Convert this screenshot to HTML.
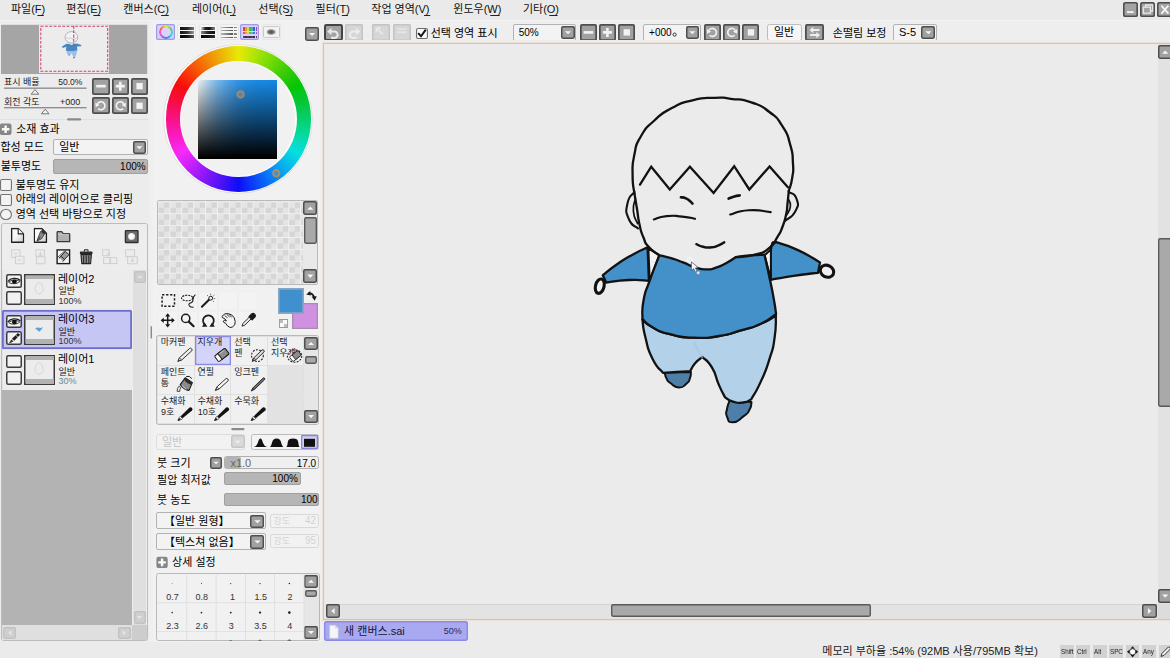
<!DOCTYPE html>
<html lang="ko"><head><meta charset="utf-8"><title>PaintTool SAI</title>
<style>
html,body{margin:0;padding:0}
body{width:1170px;height:658px;overflow:hidden;position:relative;background:#ebebeb;font-family:"Liberation Sans",sans-serif}
#app{position:absolute;left:0;top:0;width:1170px;height:658px;overflow:hidden}
#app div{position:absolute;box-sizing:border-box}
.h{position:absolute;overflow:visible;color:#000;font-family:"Liberation Sans","Noto Sans CJK KR",sans-serif;font-size:11px;line-height:11.5px;white-space:nowrap;pointer-events:none}
.s{font-size:9px;line-height:9.2px}
.k{font-size:9px;line-height:9.3px;color:#1c1c1c}
.g{font-size:9px;line-height:9.4px;color:#333}
.n{font-size:10px}
.q{font-size:8px;line-height:8.8px;color:#1a1a1a;transform:scaleX(.78);transform-origin:0 0}
svg.ov{position:absolute;left:0;top:0;width:1170px;height:658px;overflow:hidden}
</style></head><body>
<div id="app">
<div style="left:0px;top:0px;width:1170px;height:20.4px;background:#eaeaea;"></div>
<div style="left:0px;top:20.4px;width:1170px;height:23px;background:#eeeeee;border-top:1px solid #f3f3f3;"></div>
<span class="h" style="left:10.9px;top:4.17px;width:36px;height:11.5px;color:#111">파일(F)</span>
<span class="h" style="left:66.3px;top:4.17px;width:37.1px;height:11.5px;color:#111">편집(E)</span>
<span class="h" style="left:123.3px;top:4.17px;width:48.6px;height:11.5px;color:#111">캔버스(C)</span>
<span class="h" style="left:192px;top:4.17px;width:46.9px;height:11.5px;color:#111">레이어(L)</span>
<span class="h" style="left:258.3px;top:4.17px;width:37.2px;height:11.5px;color:#111">선택(S)</span>
<span class="h" style="left:315.6px;top:4.17px;width:35.4px;height:11.5px;color:#111">필터(T)</span>
<span class="h" style="left:371.3px;top:4.17px;width:62.1px;height:11.5px;color:#111">작업 영역(V)</span>
<span class="h" style="left:453.3px;top:4.17px;width:49.4px;height:11.5px;color:#111">윈도우(W)</span>
<span class="h" style="left:522.9px;top:4.17px;width:37.8px;height:11.5px;color:#111">기타(O)</span>
<div style="left:1122.8px;top:2.2px;width:15px;height:14.7px;background:#a3a3a3;box-shadow:inset 0 0 0 1.6px #4e4e4e;border-radius:2.6px;"></div>
<div style="left:1140.2px;top:2.2px;width:14.8px;height:14.7px;background:#a3a3a3;box-shadow:inset 0 0 0 1.6px #4e4e4e;border-radius:2.6px;"></div>
<div style="left:1157.4px;top:2.2px;width:14.8px;height:14.7px;background:#a3a3a3;box-shadow:inset 0 0 0 1.6px #4e4e4e;border-radius:2.6px;"></div>
<div style="left:0px;top:21.4px;width:149px;height:620.6px;background:#ececec;"></div>
<div style="left:0.6px;top:24.2px;width:147.4px;height:50.2px;background:#dedede;border-radius:1.5px;"></div>
<div style="left:1.3px;top:24.9px;width:146.1px;height:48.8px;background:#a5a5a5;"></div>
<div style="left:39.2px;top:25px;width:70.3px;height:47.6px;background:#f3e4e8;"></div>
<div style="left:40.2px;top:25.6px;width:68.2px;height:46.3px;background:#ececec;"></div>
<span class="h s" style="left:4px;top:78.18px;width:38.2px;height:9.2px;color:#222">표시 배율</span>
<span class="h s" style="left:58.2px;top:78.18px;width:27px;height:9.2px;color:#222;font-size:8.5px">50.0%</span>
<span class="h s" style="left:4px;top:97.58px;width:38.2px;height:9.2px;color:#222">회전 각도</span>
<span class="h s" style="left:60px;top:97.58px;width:20.2px;height:9.2px;color:#222">+000</span>
<div style="left:92.3px;top:77.7px;width:17.4px;height:16.9px;background:#a1a1a1;box-shadow:inset 0 0 0 1.7px #4e4e4e;border-radius:2.3px;"></div>
<div style="left:111.6px;top:77.7px;width:17.3px;height:16.9px;background:#a1a1a1;box-shadow:inset 0 0 0 1.7px #4e4e4e;border-radius:2.3px;"></div>
<div style="left:130.9px;top:77.7px;width:17.3px;height:16.9px;background:#a1a1a1;box-shadow:inset 0 0 0 1.7px #4e4e4e;border-radius:2.3px;"></div>
<div style="left:92.3px;top:97.3px;width:17.4px;height:16.9px;background:#a1a1a1;box-shadow:inset 0 0 0 1.7px #4e4e4e;border-radius:2.3px;"></div>
<div style="left:111.6px;top:97.3px;width:17.3px;height:16.9px;background:#a1a1a1;box-shadow:inset 0 0 0 1.7px #4e4e4e;border-radius:2.3px;"></div>
<div style="left:130.9px;top:97.3px;width:17.3px;height:16.9px;background:#a1a1a1;box-shadow:inset 0 0 0 1.7px #4e4e4e;border-radius:2.3px;"></div>
<span class="h" style="left:16.2px;top:123.82px;width:45.4px;height:11.5px">소재 효과</span>
<span class="h" style="left:0.5px;top:141.62px;width:45.4px;height:11.5px">합성 모드</span>
<div style="left:53.1px;top:138.9px;width:94.5px;height:16.6px;background:#f3f3f3;border:1px solid #b2b2b2;border-radius:2px;"></div>
<span class="h" style="left:59.2px;top:141.62px;width:20.9px;height:11.5px">일반</span>
<div style="left:132.7px;top:140.9px;width:13.4px;height:13.2px;background:#a1a1a1;box-shadow:inset 0 0 0 1.5px #4e4e4e;border-radius:2.4px;"></div>
<span class="h" style="left:0.7px;top:161.03px;width:42.2px;height:11.5px">불투명도</span>
<div style="left:53.1px;top:159.4px;width:94.5px;height:15px;background:#b6b6b6;border:1px solid #a0a0a0;border-radius:2px;"></div>
<span class="h n" style="left:120.1px;top:161.22px;width:23.4px;height:11.5px">100%</span>
<div style="left:0.4px;top:179.2px;width:11.3px;height:11.7px;background:#f3f3f3;box-shadow:inset 0 0 0 1.1px #747474;border-radius:2px;"></div>
<span class="h" style="left:15.7px;top:179.62px;width:66.8px;height:11.5px">불투명도 유지</span>
<div style="left:0.4px;top:194.2px;width:11.3px;height:11.4px;background:#f3f3f3;box-shadow:inset 0 0 0 1.1px #747474;border-radius:2px;"></div>
<span class="h" style="left:15.7px;top:194.32px;width:125.6px;height:11.5px">아래의 레이어으로 클리핑</span>
<div style="left:0.4px;top:208.7px;width:11.4px;height:11.3px;background:#f3f3f3;box-shadow:inset 0 0 0 1.1px #747474;border-radius:6px;"></div>
<span class="h" style="left:15.7px;top:208.92px;width:117.8px;height:11.5px">영역 선택 바탕으로 지정</span>
<div style="left:1px;top:223.4px;width:146.6px;height:418px;background:#ededed;border:1px solid #bcbcbc;border-radius:2.5px;"></div>
<div style="left:2.4px;top:270px;width:129.8px;height:355.4px;background:#b3b3b3;"></div>
<div style="left:133.2px;top:270px;width:13.2px;height:355.4px;background:#dfdfdf;"></div>
<div style="left:2.4px;top:625.4px;width:129.8px;height:15px;background:#dfdfdf;"></div>
<div style="left:132.2px;top:625.4px;width:14.4px;height:15px;background:#cdcdcd;"></div>
<div style="left:134.4px;top:270.6px;width:11.2px;height:12px;background:#cfcfcf;box-shadow:inset 0 0 0 1.4px #c2c2c2;border-radius:2.4px;"></div>
<div style="left:133.6px;top:610.8px;width:12px;height:13.2px;background:#cfcfcf;box-shadow:inset 0 0 0 1.4px #c2c2c2;border-radius:2.4px;"></div>
<div style="left:3.3px;top:626.6px;width:13.1px;height:12.2px;background:#cfcfcf;box-shadow:inset 0 0 0 1.4px #c2c2c2;border-radius:2.4px;"></div>
<div style="left:118px;top:626.6px;width:12.6px;height:12.2px;background:#cfcfcf;box-shadow:inset 0 0 0 1.4px #c2c2c2;border-radius:2.4px;"></div>
<div style="left:2.4px;top:270px;width:129.8px;height:120.2px;background:#e3e3e3;"></div>
<div style="left:2.6px;top:270px;width:129.6px;height:39.2px;background:#ececec;"></div>
<div style="left:6.4px;top:274.2px;width:15.4px;height:13.8px;background:#f1f1f1;box-shadow:inset 0 0 0 1.5px #3c3c3c;border-radius:2.2px;"></div>
<div style="left:6.4px;top:291px;width:15.4px;height:13.9px;background:#f1f1f1;box-shadow:inset 0 0 0 1.5px #3c3c3c;border-radius:2.2px;"></div>
<div style="left:24.2px;top:274.2px;width:30.7px;height:30.7px;background:#ececec;box-shadow:inset 0 0 0 1.5px #3c3c3c;"></div>
<div style="left:25.5px;top:275.5px;width:28.1px;height:3.9px;background:#b2b2b2;"></div>
<div style="left:25.5px;top:298.6px;width:28.1px;height:5px;background:#b2b2b2;"></div>
<span class="h" style="left:58px;top:273.62px;width:37.7px;height:11.5px">레이어2</span>
<span class="h s" style="left:58.5px;top:287.18px;width:17.5px;height:9.2px;color:#161616">일반</span>
<span class="h s" style="left:58.5px;top:296.98px;width:23.5px;height:9.2px;color:#333">100%</span>
<div style="left:2.4px;top:309.6px;width:129.4px;height:39.2px;background:#c6c6f4;box-shadow:inset 0 0 0 1.8px #6e6ecc;border-radius:1.5px;"></div>
<div style="left:6.4px;top:314.6px;width:15.4px;height:13.8px;background:#f1f1f1;box-shadow:inset 0 0 0 1.5px #3c3c3c;border-radius:2.2px;"></div>
<div style="left:6.4px;top:331.4px;width:15.4px;height:13.9px;background:#f1f1f1;box-shadow:inset 0 0 0 1.5px #3c3c3c;border-radius:2.2px;"></div>
<div style="left:24.2px;top:314.6px;width:30.7px;height:30.7px;background:#ececec;box-shadow:inset 0 0 0 1.5px #3c3c3c;"></div>
<div style="left:25.5px;top:315.9px;width:28.1px;height:3.9px;background:#b2b2b2;"></div>
<div style="left:25.5px;top:339px;width:28.1px;height:5px;background:#b2b2b2;"></div>
<span class="h" style="left:58px;top:314.02px;width:37.7px;height:11.5px">레이어3</span>
<span class="h s" style="left:58.5px;top:327.58px;width:17.5px;height:9.2px;color:#161616">일반</span>
<span class="h s" style="left:58.5px;top:337.38px;width:23.5px;height:9.2px;color:#333">100%</span>
<div style="left:2.6px;top:350.4px;width:129.6px;height:39.2px;background:#ececec;"></div>
<div style="left:6.4px;top:354.6px;width:15.4px;height:13.8px;background:#f1f1f1;box-shadow:inset 0 0 0 1.5px #3c3c3c;border-radius:2.2px;"></div>
<div style="left:6.4px;top:371.4px;width:15.4px;height:13.9px;background:#f1f1f1;box-shadow:inset 0 0 0 1.5px #3c3c3c;border-radius:2.2px;"></div>
<div style="left:24.2px;top:354.6px;width:30.7px;height:30.7px;background:#ececec;box-shadow:inset 0 0 0 1.5px #3c3c3c;"></div>
<div style="left:25.5px;top:355.9px;width:28.1px;height:3.9px;background:#b2b2b2;"></div>
<div style="left:25.5px;top:379px;width:28.1px;height:5px;background:#b2b2b2;"></div>
<span class="h" style="left:58px;top:354.02px;width:36.7px;height:11.5px">레이어1</span>
<span class="h s" style="left:58.5px;top:367.58px;width:17.5px;height:9.2px;color:#161616">일반</span>
<span class="h s" style="left:58.5px;top:377.38px;width:17.5px;height:9.2px;color:#5f8b99">30%</span>
<div style="left:149px;top:21.4px;width:3.6px;height:620.6px;background:#efefef;"></div>
<div style="left:152.6px;top:21.4px;width:170.6px;height:620.6px;background:#f1f1f1;"></div>
<div style="left:156.4px;top:23.6px;width:19px;height:16.8px;background:#d9d2fb;box-shadow:inset 0 0 0 1.2px #9b9bea;border-radius:2.2px;"></div>
<div style="left:177.4px;top:23.6px;width:19px;height:16.8px;background:#f4f4f4;border:1px solid #e6e6e6;border-radius:2.2px;"></div>
<div style="left:198.6px;top:23.6px;width:19px;height:16.8px;background:#f4f4f4;border:1px solid #e6e6e6;border-radius:2.2px;"></div>
<div style="left:219.6px;top:23.6px;width:19px;height:16.8px;background:#f4f4f4;border:1px solid #e6e6e6;border-radius:2.2px;"></div>
<div style="left:240.4px;top:23.6px;width:19px;height:16.8px;background:#d9d2fb;box-shadow:inset 0 0 0 1.2px #9b9bea;border-radius:2.2px;"></div>
<div style="left:261.6px;top:23.6px;width:19px;height:16.8px;background:#f4f4f4;border:1px solid #e6e6e6;border-radius:2.2px;"></div>
<div style="left:159.1px;top:25.3px;width:13.6px;height:13.6px;border-radius:50%;background:conic-gradient(#f0e040,#50d860,#40d8e0,#5070f0,#e060e8,#f06070,#f0e040);-webkit-mask:radial-gradient(circle,transparent 4.6px,#000 5.1px);mask:radial-gradient(circle,transparent 4.6px,#000 5.1px)"></div>
<div style="left:179.6px;top:27px;width:14.8px;height:2.9px;background:linear-gradient(90deg,#111,#222,#777);"></div>
<div style="left:179.6px;top:31.1px;width:14.8px;height:2.9px;background:linear-gradient(90deg,#111,#333,#999);"></div>
<div style="left:179.6px;top:35.2px;width:14.8px;height:2.9px;background:linear-gradient(90deg,#000,#111,#555);"></div>
<div style="left:200.8px;top:27px;width:14.6px;height:2.9px;background:linear-gradient(90deg,#ddd,#222 30%,#111 60%,#888);"></div>
<div style="left:200.8px;top:31.1px;width:14.6px;height:2.9px;background:linear-gradient(90deg,#888,#222,#111);"></div>
<div style="left:200.8px;top:35.2px;width:14.6px;height:2.9px;background:linear-gradient(90deg,#000,#111,#333);"></div>
<div style="left:221.4px;top:26.6px;width:15.4px;height:1.5px;background:linear-gradient(90deg,#b8b8b8,#555 70%,#999);"></div>
<div style="left:232.6px;top:26.3px;width:1.6px;height:2.1px;background:#eee;"></div>
<div style="left:221.4px;top:29.9px;width:15.4px;height:1.5px;background:linear-gradient(90deg,#b8b8b8,#555 70%,#999);"></div>
<div style="left:232.6px;top:29.6px;width:1.6px;height:2.1px;background:#eee;"></div>
<div style="left:221.4px;top:33.2px;width:15.4px;height:1.5px;background:linear-gradient(90deg,#b8b8b8,#555 70%,#999);"></div>
<div style="left:232.6px;top:32.9px;width:1.6px;height:2.1px;background:#eee;"></div>
<div style="left:221.4px;top:36.5px;width:15.4px;height:1.5px;background:linear-gradient(90deg,#b8b8b8,#555 70%,#999);"></div>
<div style="left:232.6px;top:36.2px;width:1.6px;height:2.1px;background:#eee;"></div>
<div style="left:243.2px;top:27.2px;width:1.5px;height:4px;background:linear-gradient(#e04040,#e04040);"></div>
<div style="left:243.2px;top:32.4px;width:1.5px;height:2px;background:#e04040;opacity:.85;"></div>
<div style="left:243.2px;top:35.6px;width:1.5px;height:2px;background:#604040;"></div>
<div style="left:245.25px;top:27.2px;width:1.5px;height:4px;background:linear-gradient(#e0a030,#e0a030);"></div>
<div style="left:245.25px;top:32.4px;width:1.5px;height:2px;background:#e0a030;opacity:.85;"></div>
<div style="left:245.25px;top:35.6px;width:1.5px;height:2px;background:#303050;"></div>
<div style="left:247.3px;top:27.2px;width:1.5px;height:4px;background:linear-gradient(#d8d840,#d8d840);"></div>
<div style="left:247.3px;top:32.4px;width:1.5px;height:2px;background:#d8d840;opacity:.85;"></div>
<div style="left:247.3px;top:35.6px;width:1.5px;height:2px;background:#604040;"></div>
<div style="left:249.35px;top:27.2px;width:1.5px;height:4px;background:linear-gradient(#40c050,#40c050);"></div>
<div style="left:249.35px;top:32.4px;width:1.5px;height:2px;background:#40c050;opacity:.85;"></div>
<div style="left:249.35px;top:35.6px;width:1.5px;height:2px;background:#303050;"></div>
<div style="left:251.4px;top:27.2px;width:1.5px;height:4px;background:linear-gradient(#40b0d0,#40b0d0);"></div>
<div style="left:251.4px;top:32.4px;width:1.5px;height:2px;background:#40b0d0;opacity:.85;"></div>
<div style="left:251.4px;top:35.6px;width:1.5px;height:2px;background:#604040;"></div>
<div style="left:253.45px;top:27.2px;width:1.5px;height:4px;background:linear-gradient(#4060d0,#4060d0);"></div>
<div style="left:253.45px;top:32.4px;width:1.5px;height:2px;background:#4060d0;opacity:.85;"></div>
<div style="left:253.45px;top:35.6px;width:1.5px;height:2px;background:#303050;"></div>
<div style="left:255.5px;top:27.2px;width:1.5px;height:4px;background:linear-gradient(#a040c0,#a040c0);"></div>
<div style="left:255.5px;top:32.4px;width:1.5px;height:2px;background:#a040c0;opacity:.85;"></div>
<div style="left:255.5px;top:35.6px;width:1.5px;height:2px;background:#604040;"></div>
<div style="left:263.4px;top:26px;width:16.4px;height:12.2px;background:#f2f2f2;border:1px solid #c8c8c8;border-radius:1.5px;"></div>
<div style="left:267px;top:29.2px;width:9.4px;height:6.2px;background:radial-gradient(ellipse at 45% 50%,#555 20%,#999 55%,rgba(220,220,220,0) 75%);"></div>
<div style="left:305px;top:27.3px;width:14.2px;height:13.8px;background:#a1a1a1;box-shadow:inset 0 0 0 1.5px #4e4e4e;border-radius:2.4px;"></div>
<div style="left:164.3px;top:45.1px;width:147.8px;height:147.8px;border-radius:50%;background:#fafafa;box-shadow:0 0 0 0.6px #d8d8d8"></div>
<div style="left:165.5px;top:46.3px;width:145.4px;height:145.4px;border-radius:50%;background:conic-gradient(from 0deg,hsl(60,94%,47%) 0deg,hsl(75,94%,46%) 15deg,hsl(90,94%,44%) 30deg,hsl(105,94%,41%) 45deg,hsl(120,94%,40%) 60deg,hsl(135,94%,40%) 75deg,hsl(150,94%,42%) 90deg,hsl(165,94%,44%) 105deg,hsl(180,94%,45%) 120deg,hsl(195,94%,48%) 135deg,hsl(210,94%,50%) 150deg,hsl(225,94%,51%) 165deg,hsl(240,94%,51%) 180deg,hsl(255,94%,52%) 195deg,hsl(270,94%,53%) 210deg,hsl(285,94%,55%) 225deg,hsl(300,94%,57%) 240deg,hsl(315,94%,54%) 255deg,hsl(330,94%,52%) 270deg,hsl(345,94%,51%) 285deg,hsl(0,94%,51%) 300deg,hsl(15,94%,50%) 315deg,hsl(30,94%,49%) 330deg,hsl(45,94%,48%) 345deg,hsl(60,94%,47%) 360deg)"></div>
<div style="left:179.8px;top:60.6px;width:116.8px;height:116.8px;border-radius:50%;background:#fafafa"></div>
<div style="left:181.1px;top:61.9px;width:114.2px;height:114.2px;border-radius:50%;background:#f1f1f1"></div>
<div style="left:198.2px;top:80px;width:79px;height:79px;background:linear-gradient(to top,#000 2%,rgba(0,0,0,.5) 50%,rgba(0,0,0,0) 100%),linear-gradient(to right,#eef0f2 0%,#b2d3ee 12%,#77b7ea 25%,#52a5e8 37%,#3296e6 50%,#238ee5 62%,#1a8ae4 75%,#1688e4 100%);"></div>
<div style="left:157.4px;top:199.6px;width:160.8px;height:85px;background:#e3e3e3;border:1px solid #b9b9b9;border-radius:2px;"></div>
<div style="left:158.4px;top:200.6px;width:144.4px;height:83px;background-color:#e4e4e4;background-image:linear-gradient(90deg,rgba(255,255,255,.55) 1px,transparent 1px),linear-gradient(rgba(255,255,255,.55) 1px,transparent 1px),conic-gradient(#d6d6d6 25%,#e4e4e4 0 50%,#d6d6d6 0 75%,#e4e4e4 0);background-size:11.9px 11.9px,11.9px 11.9px,11.9px 11.9px;background-position:-0.5px 0.3px,-0.5px 0.3px,0.2px 0.9px"></div>
<div style="left:302.9px;top:200.6px;width:14.3px;height:83px;background:#e9e9e9;"></div>
<div style="left:303.3px;top:201.1px;width:14px;height:14.2px;background:#a1a1a1;box-shadow:inset 0 0 0 1.5px #4e4e4e;border-radius:2.4px;"></div>
<div style="left:303.6px;top:217px;width:13.4px;height:27.4px;background:#a9a9a9;box-shadow:inset 0 0 0 1.4px #5a5a5a;border-radius:2.4px;"></div>
<div style="left:303.3px;top:269.1px;width:14px;height:14.1px;background:#a1a1a1;box-shadow:inset 0 0 0 1.5px #4e4e4e;border-radius:2.4px;"></div>
<div style="left:158.4px;top:290.6px;width:19.2px;height:19.2px;background:#f3f3f3;border:1px solid #eeeeee;border-radius:1.5px;"></div>
<div style="left:178.4px;top:290.6px;width:19.2px;height:19.2px;background:#f3f3f3;border:1px solid #eeeeee;border-radius:1.5px;"></div>
<div style="left:198.4px;top:290.6px;width:19.2px;height:19.2px;background:#f3f3f3;border:1px solid #eeeeee;border-radius:1.5px;"></div>
<div style="left:218.4px;top:290.6px;width:19.2px;height:19.2px;background:#f3f3f3;border:1px solid #eeeeee;border-radius:1.5px;"></div>
<div style="left:238.4px;top:290.6px;width:19.2px;height:19.2px;background:#f3f3f3;border:1px solid #eeeeee;border-radius:1.5px;"></div>
<div style="left:158.4px;top:310.6px;width:19.2px;height:19.2px;background:#f3f3f3;border:1px solid #eeeeee;border-radius:1.5px;"></div>
<div style="left:178.4px;top:310.6px;width:19.2px;height:19.2px;background:#f3f3f3;border:1px solid #eeeeee;border-radius:1.5px;"></div>
<div style="left:198.4px;top:310.6px;width:19.2px;height:19.2px;background:#f3f3f3;border:1px solid #eeeeee;border-radius:1.5px;"></div>
<div style="left:218.4px;top:310.6px;width:19.2px;height:19.2px;background:#f3f3f3;border:1px solid #eeeeee;border-radius:1.5px;"></div>
<div style="left:238.4px;top:310.6px;width:19.2px;height:19.2px;background:#f3f3f3;border:1px solid #eeeeee;border-radius:1.5px;"></div>
<div style="left:292.4px;top:303px;width:25.8px;height:26px;background:#d091e1;box-shadow:inset 0 0 0 1.3px #a58cb2;"></div>
<div style="left:278px;top:288.4px;width:25.8px;height:25.8px;background:#4090cf;box-shadow:inset 0 0 0 1.7px #86a6c4;"></div>
<div style="left:278.8px;top:318.8px;width:9.4px;height:9.4px;background:#fafafa;box-shadow:inset 0 0 0 0.9px #9a9a9a;"></div>
<div style="left:279.7px;top:319.7px;width:3.8px;height:3.8px;background:#bdbdbd;"></div>
<div style="left:283.5px;top:323.5px;width:3.8px;height:3.8px;background:#bdbdbd;"></div>
<div style="left:156.4px;top:335px;width:163px;height:89.9px;background:#e0e0e0;border:1px solid #b9b9b9;border-radius:2.5px;"></div>
<div style="left:158px;top:336.5px;width:36.1px;height:28.2px;background:#f0f0f0;"></div>
<div style="left:194.8px;top:335.8px;width:35.9px;height:29.2px;background:#d4d4f9;box-shadow:inset 0 0 0 1.3px #8a8ae2;"></div>
<div style="left:231.4px;top:336.5px;width:35.3px;height:28.2px;background:#f0f0f0;"></div>
<div style="left:267.7px;top:336.5px;width:35.4px;height:28.2px;background:#f0f0f0;"></div>
<div style="left:158px;top:365.7px;width:36.1px;height:28.3px;background:#f0f0f0;"></div>
<div style="left:195.1px;top:365.7px;width:35.3px;height:28.3px;background:#f0f0f0;"></div>
<div style="left:231.4px;top:365.7px;width:35.3px;height:28.3px;background:#f0f0f0;"></div>
<div style="left:267.7px;top:365.7px;width:35.4px;height:28.3px;background:#e2e2e2;"></div>
<div style="left:158px;top:395px;width:36.1px;height:28.4px;background:#f0f0f0;"></div>
<div style="left:195.1px;top:395px;width:35.3px;height:28.4px;background:#f0f0f0;"></div>
<div style="left:231.4px;top:395px;width:35.3px;height:28.4px;background:#f0f0f0;"></div>
<div style="left:267.7px;top:395px;width:35.4px;height:28.4px;background:#e2e2e2;"></div>
<div style="left:304px;top:336px;width:14.4px;height:87.9px;background:#e6e6e6;"></div>
<div style="left:304.4px;top:336.7px;width:13.3px;height:13.8px;background:#a1a1a1;box-shadow:inset 0 0 0 1.5px #4e4e4e;border-radius:2.4px;"></div>
<div style="left:304.7px;top:356px;width:12.7px;height:7.8px;background:#a9a9a9;box-shadow:inset 0 0 0 1.4px #5a5a5a;border-radius:2.4px;"></div>
<div style="left:304.4px;top:409.7px;width:13.3px;height:13.8px;background:#a1a1a1;box-shadow:inset 0 0 0 1.5px #4e4e4e;border-radius:2.4px;"></div>
<span class="h k" style="left:160.7px;top:338.4px;width:24.9px;height:9.3px">마커펜</span>
<span class="h k" style="left:197.4px;top:338.4px;width:24.4px;height:9.3px">지우개</span>
<span class="h k" style="left:234.2px;top:338.4px;width:16.2px;height:9.3px">선택</span>
<span class="h k" style="left:234.2px;top:349.1px;width:7.2px;height:9.3px">펜</span>
<span class="h k" style="left:270.9px;top:338.4px;width:16.3px;height:9.3px">선택</span>
<span class="h k" style="left:270.9px;top:349.1px;width:24.5px;height:9.3px">지우개</span>
<span class="h k" style="left:160.7px;top:367.5px;width:26.1px;height:9.3px">페인트</span>
<span class="h k" style="left:160.7px;top:379.1px;width:7.9px;height:9.3px">통</span>
<span class="h k" style="left:197.4px;top:367.5px;width:15.8px;height:9.3px">연필</span>
<span class="h k" style="left:234.2px;top:367.5px;width:24.8px;height:9.3px">잉크펜</span>
<span class="h k" style="left:160.7px;top:396.7px;width:26.1px;height:9.3px">수채화</span>
<span class="h k" style="left:161.1px;top:407.5px;width:13.1px;height:9.3px">9호</span>
<span class="h k" style="left:197.4px;top:396.7px;width:26.2px;height:9.3px">수채화</span>
<span class="h k" style="left:197.8px;top:407.5px;width:17.4px;height:9.3px">10호</span>
<span class="h k" style="left:234.2px;top:396.7px;width:25.8px;height:9.3px">수묵화</span>
<div style="left:156.4px;top:434px;width:89px;height:15.6px;background:#f2f2f2;border:1px solid #dcdcdc;border-radius:2.5px;"></div>
<span class="h" style="left:162px;top:437.23px;width:20.7px;height:11.5px;color:#c4c4c4">일반</span>
<div style="left:230.7px;top:435.3px;width:14px;height:13.2px;background:#d9d9d9;box-shadow:inset 0 0 0 1.5px #c6c6c6;border-radius:2.4px;"></div>
<div style="left:250.7px;top:434px;width:68.3px;height:15.6px;background:#f4f4f4;border:1px solid #bcbcbc;border-radius:2.5px;"></div>
<div style="left:301.2px;top:435.2px;width:16.4px;height:13.4px;background:#cfcff8;box-shadow:inset 0 0 0 1.3px #8686e0;border-radius:1px;"></div>
<span class="h" style="left:157.1px;top:457.83px;width:34.1px;height:11.5px">붓 크기</span>
<div style="left:210.2px;top:456.9px;width:11.8px;height:11.9px;background:#a1a1a1;box-shadow:inset 0 0 0 1.5px #4e4e4e;border-radius:2.4px;"></div>
<div style="left:224.4px;top:456.4px;width:94.4px;height:12.9px;background:#efefef;border:1px solid #b0b0b0;border-radius:2.5px;"></div>
<div style="left:225.4px;top:457.4px;width:15.8px;height:10.9px;background:#b3b3b3;border-radius:1.5px;"></div>
<span class="h" style="left:230.4px;top:457.96px;width:21.6px;height:10.4px;line-height:10.4px;color:#666">x1.0</span>
<span class="h n" style="left:296.7px;top:457.62px;width:19.4px;height:11.5px">17.0</span>
<span class="h" style="left:157.1px;top:475.03px;width:57px;height:11.5px">필압 최저값</span>
<div style="left:224.4px;top:472px;width:76.2px;height:13.2px;background:#b6b6b6;border:1px solid #a0a0a0;border-radius:2px;"></div>
<span class="h n" style="left:272.3px;top:473.33px;width:23.7px;height:11.5px">100%</span>
<span class="h" style="left:157.1px;top:494.62px;width:34.4px;height:11.5px">붓 농도</span>
<div style="left:224.4px;top:492.6px;width:94.4px;height:13.2px;background:#b6b6b6;border:1px solid #a0a0a0;border-radius:2px;"></div>
<span class="h n" style="left:300.9px;top:494.03px;width:15.2px;height:11.5px">100</span>
<div style="left:156.4px;top:512px;width:109.4px;height:17.4px;background:#f3f3f3;border:1px solid #b2b2b2;border-radius:2px;"></div>
<span class="h" style="left:164px;top:515.4px;width:60.5px;height:12px;line-height:12px">【일반 원형】</span>
<div style="left:250.4px;top:514.7px;width:14.1px;height:13.8px;background:#a1a1a1;box-shadow:inset 0 0 0 1.5px #4e4e4e;border-radius:2.4px;"></div>
<div style="left:270.4px;top:513.6px;width:48.4px;height:14.3px;background:#f2f2f2;border:1px solid #d9d9d9;border-radius:2.5px;"></div>
<span class="h" style="left:273.6px;top:516.81px;width:17px;height:9.4px;font-size:9px;line-height:9.4px;color:#d2d2d2">강도</span>
<span class="h n" style="left:304.9px;top:515.43px;width:11.2px;height:11.5px;color:#d2d2d2">42</span>
<div style="left:156.4px;top:532.8px;width:109.4px;height:16.8px;background:#f3f3f3;border:1px solid #b2b2b2;border-radius:2px;"></div>
<span class="h" style="left:164px;top:535.9px;width:70.7px;height:12px;line-height:12px">【텍스쳐 없음】</span>
<div style="left:250.4px;top:534.8px;width:14.1px;height:13.8px;background:#a1a1a1;box-shadow:inset 0 0 0 1.5px #4e4e4e;border-radius:2.4px;"></div>
<div style="left:270.4px;top:533.6px;width:48.4px;height:14.3px;background:#f2f2f2;border:1px solid #d9d9d9;border-radius:2.5px;"></div>
<span class="h" style="left:273.6px;top:536.81px;width:17px;height:9.4px;font-size:9px;line-height:9.4px;color:#d2d2d2">강도</span>
<span class="h n" style="left:304.9px;top:535.43px;width:11.2px;height:11.5px;color:#d2d2d2">95</span>
<span class="h" style="left:172.1px;top:557.02px;width:44.9px;height:11.5px">상세 설정</span>
<div style="left:156.4px;top:572.6px;width:163.4px;height:68.7px;background:#f1f1f1;border:1px solid #b9b9b9;border-radius:2.5px;"></div>
<div style="left:304px;top:573.6px;width:14.8px;height:66.7px;background:#e6e6e6;"></div>
<div style="left:304.4px;top:574.5px;width:13.3px;height:13.6px;background:#a1a1a1;box-shadow:inset 0 0 0 1.5px #4e4e4e;border-radius:2.4px;"></div>
<div style="left:304.7px;top:590.2px;width:12.7px;height:6.8px;background:#a9a9a9;box-shadow:inset 0 0 0 1.4px #5a5a5a;border-radius:2.4px;"></div>
<div style="left:304.4px;top:625.7px;width:13.3px;height:13.8px;background:#a1a1a1;box-shadow:inset 0 0 0 1.5px #4e4e4e;border-radius:2.4px;"></div>
<span class="h g" style="left:166.22px;top:592.61px;width:11.85px;height:9.4px">0.7</span>
<span class="h g" style="left:195.52px;top:592.61px;width:11.86px;height:9.4px">0.8</span>
<span class="h g" style="left:229.92px;top:592.61px;width:4px;height:9.4px">1</span>
<span class="h g" style="left:254.51px;top:592.61px;width:11.08px;height:9.4px">1.5</span>
<span class="h g" style="left:287.38px;top:592.61px;width:4px;height:9.4px">2</span>
<span class="h g" style="left:166.26px;top:621.61px;width:11.78px;height:9.4px">2.3</span>
<span class="h g" style="left:195.56px;top:621.61px;width:11.78px;height:9.4px">2.6</span>
<span class="h g" style="left:228.78px;top:621.61px;width:4px;height:9.4px">3</span>
<span class="h g" style="left:254.16px;top:621.61px;width:11.78px;height:9.4px">3.5</span>
<span class="h g" style="left:287.14px;top:621.61px;width:4.41px;height:9.4px">4</span>
<div style="left:319.8px;top:21.4px;width:3.4px;height:620.6px;background:#efefef;"></div>
<div style="left:323.6px;top:23.6px;width:19px;height:17.2px;background:#a2a2a2;border:2px solid #444444;border-radius:2.4px;"></div>
<div style="left:345.1px;top:23.8px;width:17.8px;height:16.8px;background:#d6d6d6;box-shadow:inset 0 0 0 1.5px #c4c4c4;border-radius:1.8px;"></div>
<div style="left:371.6px;top:23.8px;width:18.2px;height:16.8px;background:#d6d6d6;box-shadow:inset 0 0 0 1.5px #c4c4c4;border-radius:1.8px;"></div>
<div style="left:392.6px;top:23.8px;width:18.1px;height:16.8px;background:#d6d6d6;box-shadow:inset 0 0 0 1.5px #c4c4c4;border-radius:1.8px;"></div>
<div style="left:416.2px;top:27.6px;width:11.8px;height:11.8px;background:#fafafa;box-shadow:inset 0 0 0 1.1px #6c6c6c;border-radius:2px;"></div>
<span class="h" style="left:430.7px;top:28.43px;width:72px;height:11.5px">선택 영역 표시</span>
<div style="left:513.4px;top:24.2px;width:62.7px;height:16.4px;background:#f3f3f3;border:1px solid #b2b2b2;border-radius:2px;"></div>
<span class="h n" style="left:518.7px;top:27.23px;width:19.5px;height:11.5px">50%</span>
<div style="left:561.2px;top:25.7px;width:13.6px;height:13.5px;background:#a1a1a1;box-shadow:inset 0 0 0 1.5px #4e4e4e;border-radius:2.4px;"></div>
<div style="left:579.7px;top:23.9px;width:17.4px;height:17px;background:#a1a1a1;box-shadow:inset 0 0 0 1.7px #4e4e4e;border-radius:2.3px;"></div>
<div style="left:598.7px;top:23.9px;width:17.4px;height:17px;background:#a1a1a1;box-shadow:inset 0 0 0 1.7px #4e4e4e;border-radius:2.3px;"></div>
<div style="left:618.1px;top:23.9px;width:17.3px;height:17px;background:#a1a1a1;box-shadow:inset 0 0 0 1.7px #4e4e4e;border-radius:2.3px;"></div>
<div style="left:643px;top:24.2px;width:58px;height:16.4px;background:#f3f3f3;border:1px solid #b2b2b2;border-radius:2px;"></div>
<span class="h n" style="left:649.1px;top:27.23px;width:21.6px;height:11.5px">+000</span>
<div style="left:685.6px;top:25.7px;width:13.5px;height:13.5px;background:#a1a1a1;box-shadow:inset 0 0 0 1.5px #4e4e4e;border-radius:2.4px;"></div>
<div style="left:703.9px;top:23.9px;width:17.1px;height:17px;background:#a1a1a1;box-shadow:inset 0 0 0 1.7px #4e4e4e;border-radius:2.3px;"></div>
<div style="left:723.2px;top:23.9px;width:17.1px;height:17px;background:#a1a1a1;box-shadow:inset 0 0 0 1.7px #4e4e4e;border-radius:2.3px;"></div>
<div style="left:742.4px;top:23.9px;width:17.1px;height:17px;background:#a1a1a1;box-shadow:inset 0 0 0 1.7px #4e4e4e;border-radius:2.3px;"></div>
<div style="left:767.3px;top:24.2px;width:35.2px;height:16.4px;background:#f6f6f6;border:1px solid #bdbdbd;border-radius:2.5px;"></div>
<span class="h" style="left:773.9px;top:27.23px;width:21.2px;height:11.5px">일반</span>
<div style="left:805.3px;top:23.8px;width:18.9px;height:17px;background:#a1a1a1;box-shadow:inset 0 0 0 1.8px #4e4e4e;border-radius:2.4px;"></div>
<span class="h" style="left:832.8px;top:28.43px;width:55.8px;height:11.5px">손떨림 보정</span>
<div style="left:893.2px;top:24.2px;width:43.6px;height:16.4px;background:#f3f3f3;border:1px solid #b2b2b2;border-radius:2px;"></div>
<span class="h" style="left:898.9px;top:27.23px;width:17.8px;height:11.5px">S-5</span>
<div style="left:921.4px;top:25.7px;width:14px;height:13.5px;background:#a1a1a1;box-shadow:inset 0 0 0 1.5px #4e4e4e;border-radius:2.4px;"></div>
<div style="left:323.2px;top:39.6px;width:846.8px;height:3.4px;background:linear-gradient(#eeeeee,#f1e6dc);"></div>
<div style="left:322.4px;top:42px;width:847.6px;height:579px;background:#ece1d7;"></div>
<div style="left:323.4px;top:42.6px;width:846.6px;height:577.4px;background:#ebebeb;border:1px solid #dcc0aa;border-right:none;"></div>
<div style="left:324.4px;top:43.6px;width:1px;height:575.4px;background:#efe9e3;"></div>
<div style="left:1157.6px;top:44px;width:12.4px;height:560.2px;background:#e2e2e2;"></div>
<div style="left:1158.1px;top:45.3px;width:14.2px;height:13.8px;background:#a1a1a1;box-shadow:inset 0 0 0 1.5px #4e4e4e;border-radius:2.4px;"></div>
<div style="left:1158.4px;top:238.4px;width:13.6px;height:168.8px;background:#a9a9a9;box-shadow:inset 0 0 0 1.4px #5a5a5a;border-radius:2.4px;"></div>
<div style="left:1158.1px;top:589.3px;width:14.2px;height:13.6px;background:#a1a1a1;box-shadow:inset 0 0 0 1.5px #4e4e4e;border-radius:2.4px;"></div>
<div style="left:324.6px;top:603.8px;width:833px;height:14.8px;background:#e3e3e3;border-top:1px solid #d4d4d4;"></div>
<div style="left:1157.6px;top:603.8px;width:12.4px;height:14.8px;background:#dcdcdc;"></div>
<div style="left:325.5px;top:604.1px;width:14.8px;height:13.8px;background:#a1a1a1;box-shadow:inset 0 0 0 1.5px #4e4e4e;border-radius:2.4px;"></div>
<div style="left:610.6px;top:604.4px;width:260.2px;height:12.8px;background:#a9a9a9;box-shadow:inset 0 0 0 1.4px #5a5a5a;border-radius:2.4px;"></div>
<div style="left:1142.3px;top:604.1px;width:14.8px;height:13.8px;background:#a1a1a1;box-shadow:inset 0 0 0 1.5px #4e4e4e;border-radius:2.4px;"></div>
<div style="left:323.8px;top:621.4px;width:144.4px;height:20px;background:#a9a9f1;box-shadow:inset 0 0 0 1.4px #8b8be6;border-radius:3px;"></div>
<span class="h" style="left:344.1px;top:626.23px;width:65.6px;height:11.5px;color:#16163a">새 캔버스.sai</span>
<span class="h s" style="left:443.8px;top:626.98px;width:18.2px;height:9.2px;color:#2a2a5a">50%</span>
<span class="h" style="left:822.3px;top:645.62px;width:228.2px;height:11.5px;color:#222">메모리 부하율 :54% (92MB 사용/795MB 확보)</span>
<div style="left:1059.7px;top:645px;width:14.2px;height:14px;background:#d2d2d2;"></div>
<span class="h q" style="left:1060.7px;top:648.12px;width:12.4px;height:8.8px">Shift</span>
<div style="left:1076.3px;top:645px;width:13.9px;height:14px;background:#d2d2d2;"></div>
<span class="h q" style="left:1077.3px;top:648.12px;width:12.1px;height:8.8px">Ctrl</span>
<div style="left:1093px;top:645px;width:13.9px;height:14px;background:#d2d2d2;"></div>
<span class="h q" style="left:1094px;top:648.12px;width:12.1px;height:8.8px">Alt</span>
<div style="left:1109.2px;top:645px;width:14px;height:14px;background:#d2d2d2;"></div>
<span class="h q" style="left:1110.2px;top:648.12px;width:12.2px;height:8.8px">SPC</span>
<div style="left:1125.8px;top:645px;width:13.6px;height:14px;background:#d2d2d2;"></div>
<div style="left:1141.7px;top:645px;width:14.3px;height:14px;background:#d2d2d2;"></div>
<span class="h q" style="left:1142.7px;top:648.12px;width:12.5px;height:8.8px">Any</span>
<div style="left:1158.6px;top:645px;width:13.4px;height:14px;background:#d2d2d2;"></div>
<svg class="ov" viewBox="0 0 1170 658">
<rect x="37.44" y="15" width="6.32" height="1" fill="#222" />
<rect x="93.38" y="15" width="6.81" height="1" fill="#222" />
<rect x="161.09" y="15" width="7.69" height="1" fill="#222" />
<rect x="229.97" y="15" width="5.76" height="1" fill="#222" />
<rect x="285.37" y="15" width="6.92" height="1" fill="#222" />
<rect x="341.82" y="15" width="6.08" height="1" fill="#222" />
<rect x="424.02" y="15" width="6.28" height="1" fill="#222" />
<rect x="490.24" y="15" width="9.43" height="1" fill="#222" />
<rect x="549.24" y="15" width="8.32" height="1" fill="#222" />
<rect x="1127" y="11.2" width="6.6" height="1.8" fill="#f4f4f4" />
<g fill="none" stroke="#e6e6e6" stroke-width="1.3"><rect x="1143.4" y="7.2" width="7" height="6"/><path d="M1145.6 7.2v-2.2h7v6h-2" /></g>
<path d="M1161.4 5.6l7 8M1168.4 5.6l-7 8" stroke="#f4f4f4" stroke-width="1.8" fill="none"/>
<rect x="40.8" y="26.2" width="66.9" height="45.1" fill="none" stroke="#cf3f6a" stroke-width="1.05" stroke-dasharray="2.8 1.5"/>
<g>
<ellipse cx="71.4" cy="37.3" rx="6.4" ry="5.7" fill="#f3f3f3" stroke="#a4a6ae" stroke-width="0.8"/>
<path d="M65.6 39.4l1.4 -2l1.6 1.8l1.8 -2l1.8 2.2l1.6 -2.2l1.4 1.8l1.4 -1.6l.8 1.6" fill="none" stroke="#b4b6bc" stroke-width="0.6"/>
<path d="M62.0 46.6L66.5 43.7L69.4 43.9L71.6 44.9L74 43.9L76.6 43.5L81.5 45L81 46.2L77 46.5L77.4 50.5L71.6 51.4L65.8 50.8L66.4 46.7L62.6 48Z" fill="#4686c2"/>
<path d="M65.8 50.6L71.6 51.4L77.4 50.3L76.4 54L75.2 57L73.2 57L72.2 54.2L71.4 53.2L70.4 54.6L67.6 54.6Z" fill="#9dc0e2"/>
<path d="M67.8 54.5l2.4 .1l-1 1.5zM73.2 56.9l2 .1l-1.4 1.9z" fill="#4a79a6"/>
</g>
<path d="M73.7 26V46.4" stroke="#d23c6a" stroke-width="1.1" stroke-dasharray="2.8 1.5" fill="none"/>
<rect x="4" y="87.6" width="82.6" height="1.1" fill="#757575" />
<path d="M35 89.6l3.8 4.6h-7.6z" fill="#f6f6f6" stroke="#666" stroke-width="0.9"/>
<rect x="4" y="107.2" width="82.6" height="1.1" fill="#757575" />
<path d="M45.2 109.2l3.8 4.6h-7.6z" fill="#f6f6f6" stroke="#666" stroke-width="0.9"/>
<svg x="92.6" y="78" width="16.8" height="16.3" viewBox="0 0 16 16" ><rect x="3.3" y="6.7" width="9.4" height="2.6" fill="#f2f2f2"/></svg>
<svg x="111.9" y="78" width="16.7" height="16.3" viewBox="0 0 16 16" ><path d="M3.6 6.7h3.1v-3.1h2.6v3.1h3.1v2.6h-3.1v3.1h-2.6v-3.1h-3.1z" fill="#f2f2f2"/></svg>
<svg x="131.2" y="78" width="16.7" height="16.3" viewBox="0 0 16 16" ><rect x="4.9" y="4.9" width="6.2" height="6.2" fill="#f2f2f2"/></svg>
<svg x="92.6" y="97.6" width="16.8" height="16.3" viewBox="0 0 16 16" ><path d="M5.24 10.76A3.9 3.9 0 1 0 4.62 6.05" fill="none" stroke="#f2f2f2" stroke-width="1.6"/><path d="M2.7 9.4L6.7 7.3L2.5 4.7z" fill="#f2f2f2"/></svg>
<svg x="111.9" y="97.6" width="16.7" height="16.3" viewBox="0 0 16 16" ><g transform="translate(16 0) scale(-1 1)"><path d="M5.24 10.76A3.9 3.9 0 1 0 4.62 6.05" fill="none" stroke="#f2f2f2" stroke-width="1.6"/><path d="M2.7 9.4L6.7 7.3L2.5 4.7z" fill="#f2f2f2"/></g></svg>
<svg x="131.2" y="97.6" width="16.7" height="16.3" viewBox="0 0 16 16" ><rect x="4.9" y="4.9" width="6.2" height="6.2" fill="#f2f2f2"/></svg>
<rect x="1" y="119" width="147" height="0.8" fill="#dedede" />
<rect x="67" y="118.3" width="14.2" height="2.3" fill="#8a8a8a" rx="1.1" />
<rect x="-0.2" y="123.4" width="11.7" height="11.6" fill="#868686" rx="2.2" />
<path d="M4.45 125.4h2.4v2.6h2.6v2.4h-2.6v2.6h-2.4v-2.6h-2.6v-2.4h2.6z" fill="#fafafa"/>
<svg x="133" y="141.2" width="12.8" height="12.6" viewBox="0 0 16 16" ><path d="M4.2 6.4h7.6L8 10.1z" fill="#f4f4f4"/></svg>
<defs><linearGradient id="pg" x1="0" y1="0" x2="1" y2="1"><stop offset="0.45" stop-color="#f8f8f8"/><stop offset="1" stop-color="#c9c9c9"/></linearGradient></defs>
<svg x="10.9" y="227.8" width="13.4" height="15.2" viewBox="0 0 13.4 15.2" ><path d="M0.7 0.7h6.6l5.4 5.4v8.4h-12z" fill="url(#pg)" stroke="#1e1e1e" stroke-width="1.4" stroke-linejoin="round"/><path d="M7.3 0.7v5.4h5.4" fill="#f4f4f4" stroke="#1e1e1e" stroke-width="1.1" stroke-linejoin="round"/></svg>
<svg x="33.6" y="227.8" width="13.8" height="15.2" viewBox="0 0 13.8 15.2" ><path d="M0.7 0.7h7.4l4.8 5v8.8h-12.2z" fill="url(#pg)" stroke="#1e1e1e" stroke-width="1.4" stroke-linejoin="round"/><path d="M9.2 1.2l3.6 3.8l-2 2l-3.6 -3.6z" fill="#333"/><path d="M7 3.6l3.4 3.4l-2.4 4l-4.6 2.2l1.8 -5.2z" fill="#8a8a8a" stroke="#333" stroke-width="0.8"/><path d="M3.6 13l3 -4" stroke="#222" stroke-width="0.8"/></svg>
<path d="M57.1 241.7v-9.2q0 -0.8 .8 -0.8h3.8l1.6 2h5.6q.8 0 .8 .8v7.2z" fill="#b1b1b1" stroke="#3a3a3a" stroke-width="1.3" stroke-linejoin="round"/>
<path d="M58.2 234.4h10.6" stroke="#d0d0d0" stroke-width="0.8"/>
<defs><radialGradient id="mk" cx="0.45" cy="0.45" r="0.6"><stop offset="0.5" stop-color="#fbfbfb"/><stop offset="1" stop-color="#c8c8c8"/></radialGradient></defs>
<rect x="125.4" y="230.7" width="12.6" height="11.8" fill="#6c6c6c" stroke="#2e2e2e" stroke-width="1.3" rx="0.6" />
<circle cx="131.6" cy="236.6" r="3.5" fill="url(#mk)"/>
<g fill="#ececec" stroke="#cdcdcd" stroke-width="0.9"><rect x="11.6" y="249.8" width="8.4" height="7.6"/><rect x="15.4" y="256.2" width="8.6" height="7.6"/><path d="M14.2 253.4h3" /><path d="M18.2 260.2h3"/></g>
<g fill="#ececec" stroke="#cdcdcd" stroke-width="0.9"><rect x="35.8" y="249.8" width="8.6" height="6.4"/><rect x="36.4" y="256.8" width="8.6" height="7"/><path d="M40.4 251.6v4l-2 -1.6m2 1.6l2 -1.6" fill="none"/></g>
<g fill="#ececec" stroke="#cdcdcd" stroke-width="0.9"><rect x="102.6" y="249.8" width="6.6" height="6"/><rect x="103.6" y="257.6" width="6.4" height="6"/><rect x="110.4" y="257.6" width="6.4" height="6"/><path d="M107 252.4l3 3m0 -3l-3 3" fill="none"/></g>
<g fill="#ececec" stroke="#cdcdcd" stroke-width="0.9"><rect x="125.6" y="249.8" width="9" height="6.6"/><rect x="127.6" y="256.8" width="9.6" height="7"/><path d="M132.4 258.2v3.4l-1.8 -1.4m1.8 1.4l1.8 -1.4" fill="none"/></g>
<g><rect x="57.1" y="249.9" width="12.5" height="13.7" fill="#f6f6f6" stroke="#1e1e1e" stroke-width="1.4"/><path d="M57.6 257.4l8 -7.2" stroke="#333" stroke-width="0.9"/><path d="M65.4 251.4l3.6 3.2l-6.2 7l-3.8 -3.4z" fill="#9a9a9a" stroke="#2a2a2a" stroke-width="1"/><path d="M61 256.2l3.6 3.2" stroke="#2a2a2a" stroke-width="0.9"/><path d="M59.4 258.4l3.2 3" stroke="#f4f4f4" stroke-width="1.3"/></g>
<g><path d="M84.4 251.6v-1.2q0 -.6 .6 -.6h2.4q.6 0 .6 .6v1.2" fill="none" stroke="#222" stroke-width="1.1"/><rect x="79.9" y="251.6" width="12.6" height="2.6" rx="0.8" fill="#2a2a2a"/><path d="M81 254.6h10.4l-.8 9h-8.8z" fill="#8c8c8c" stroke="#222" stroke-width="1.1" stroke-linejoin="round"/><path d="M83.6 255.4v7.6M86.2 255.4v7.6M88.8 255.4v7.6" stroke="#2a2a2a" stroke-width="1.1"/></g>
<svg x="134.4" y="270.6" width="11.2" height="12" viewBox="0 0 16 16" ><path d="M4.3 9.9h7.4L8 5.9z" fill="#e4e4e4"/></svg>
<svg x="133.6" y="610.8" width="12" height="13.2" viewBox="0 0 16 16" ><path d="M4.3 6.1h7.4L8 10.1z" fill="#e4e4e4"/></svg>
<svg x="3.3" y="626.6" width="13.1" height="12.2" viewBox="0 0 16 16" ><path d="M10.1 4.3v7.4L6 8z" fill="#e4e4e4"/></svg>
<svg x="118" y="626.6" width="12.6" height="12.2" viewBox="0 0 16 16" ><path d="M5.9 4.3v7.4L10 8z" fill="#e4e4e4"/></svg>
<svg x="6.4" y="274" width="15.4" height="14" viewBox="0 0 16 16" preserveAspectRatio="none"><path d="M1.6 8.6C4 4.6 10.6 3.6 14.6 7.4" fill="none" stroke="#222" stroke-width="1.5"/>
<path d="M2.4 9.4C5 6.4 11 6 13.8 8.8C11 11.6 5 11.8 2.4 9.4z" fill="#fbfbfb" stroke="#222" stroke-width="1"/>
<circle cx="8.3" cy="8.7" r="2.5" fill="#111"/></svg>
<path d="M35 287.5q1 -5 4 -5t4 5q1 5 -4 6.5q-4 -1 -4 -6.5z" fill="none" stroke="#d4d4d8" stroke-width="0.9"/>
<svg x="6.4" y="314.4" width="15.4" height="14" viewBox="0 0 16 16" preserveAspectRatio="none"><path d="M1.6 8.6C4 4.6 10.6 3.6 14.6 7.4" fill="none" stroke="#222" stroke-width="1.5"/>
<path d="M2.4 9.4C5 6.4 11 6 13.8 8.8C11 11.6 5 11.8 2.4 9.4z" fill="#fbfbfb" stroke="#222" stroke-width="1"/>
<circle cx="8.3" cy="8.7" r="2.5" fill="#111"/></svg>
<svg x="6.8" y="331.6" width="14.6" height="13.4" viewBox="0 0 16 16" preserveAspectRatio="none"><path d="M12.2 1.6l2.4 2.2l-6.4 7l-2.6 -2.2z" fill="#1c1c1c"/><path d="M5 9.4l2.4 2l-3.4 2.2l-1.6 .2z" fill="#333"/><path d="M9.6 4.2l2.4 2.2" stroke="#ddd" stroke-width="1" fill="none"/></svg>
<path d="M35.4 328l2.6 -.6l2.6 .6l2.2 -1l-1.2 2.6l-2.2 2.2l-2 -1.6l-2.2 -2z" fill="#5aa2d8"/>
<path d="M35 367.9q1 -5 4 -5t4 5q1 5 -4 6.5q-4 -1 -4 -6.5z" fill="none" stroke="#d4d4d8" stroke-width="0.9"/>
<rect x="150.6" y="326" width="1.4" height="12.6" fill="#8a8a8a" rx="0.7" />
<defs><clipPath id="rc"><path d="M165.9 25.4a6.7 6.7 0 1 0 .01 0zM165.9 27.4a4.7 4.7 0 1 1 -.01 0z" clip-rule="evenodd"/></clipPath></defs>
<svg x="305.3" y="27.6" width="13.6" height="13.2" viewBox="0 0 16 16" ><path d="M4.2 6.4h7.6L8 10.1z" fill="#f4f4f4"/></svg>
<circle cx="240.6" cy="94.4" r="3.2" fill="#8f8a86" fill-opacity=".55" stroke="#a98763" stroke-width="1.9"/>
<circle cx="276.3" cy="173.2" r="3.2" fill="#8090a0" fill-opacity=".5" stroke="#b08c62" stroke-width="1.9"/>
<svg x="303.6" y="201.4" width="13.4" height="13.6" viewBox="0 0 16 16" ><path d="M4.3 9.9h7.4L8 5.9z" fill="#f6f6f6"/></svg>
<svg x="303.6" y="269.4" width="13.4" height="13.5" viewBox="0 0 16 16" ><path d="M4.3 6.1h7.4L8 10.1z" fill="#f6f6f6"/></svg>
<rect x="162.1" y="294.7" width="12.4" height="11.6" fill="none" stroke="#1b1b1b" stroke-width="1.5" stroke-dasharray="2.3 1.7"/>
<ellipse cx="187.1" cy="298" rx="5.6" ry="2.8" fill="none" stroke="#1b1b1b" stroke-width="1.1" stroke-dasharray="2 1"/>
<path d="M195.4 294.6q-2.6 2.2 -2.4 5q.2 2.6 -2.6 3.4q-2.4 .8 -1 2.8q1.4 1.8 4.2 1.4" fill="none" stroke="#1b1b1b" stroke-width="1.1"/>
<path d="M201.9 306.8l7.6 -7.6" stroke="#1b1b1b" stroke-width="2" stroke-linecap="round" fill="none"/>
<circle cx="210.7" cy="298.2" r="1.9" fill="#f8f8f8" stroke="#1b1b1b" stroke-width="1"/>
<path d="M210.7 293.6v1.6M214.4 295l-1.2 1.1M215.2 298.6h-1.6M214 302l-1.1 -1.1M207 295l1.1 1.1" stroke="#555" stroke-width="0.8" fill="none"/>
<path d="M167.7 314.6v11.4M162 320.3h11.4" stroke="#1b1b1b" stroke-width="1.5" fill="none"/>
<path d="M167.7 313.2l2.6 3.2h-5.2zM167.7 327.4l2.6 -3.2h-5.2zM160.6 320.3l3.2 -2.6v5.2zM174.8 320.3l-3.2 -2.6v5.2z" fill="#1b1b1b"/>
<circle cx="185.7" cy="318.4" r="4.1" fill="none" stroke="#1b1b1b" stroke-width="1.5"/>
<path d="M188.8 321.6l4.8 4.6" stroke="#1b1b1b" stroke-width="2.2" stroke-linecap="round"/>
<path d="M205.4 325.2a5.4 5.4 0 1 1 6 0" fill="none" stroke="#1b1b1b" stroke-width="1.7"/>
<path d="M202 326.8h5.4l-2.8 -4.4zM214.8 326.8h-5.4l2.8 -4.4z" fill="#1b1b1b"/>
<path d="M222 316.4l2.4 -2.2l1.8 -.6l2.6 .2l3 1.2l2.4 2.8l1 3.6l-.4 3.4l-2.6 2.4l-2.4 .2l-2.6 -1.8l-1.4 -2.2l-2 -1l-.6 -1.2l1.2 -.8l2 .6l-1.4 -2l-2.8 -1.6z" fill="#f4f4f4" stroke="#1b1b1b" stroke-width="1"/>
<path d="M224.6 315.6l3 2.2M226.6 314.2l3 2.8M229.2 314.4l2.4 3" stroke="#1b1b1b" stroke-width="0.8" fill="none"/>
<path d="M242 326.2l1 -2.8l6.4 -6.4l1.8 1.8l-6.4 6.4z" fill="#e8e8e8" stroke="#1b1b1b" stroke-width="0.9"/>
<path d="M249 316.6l2.6 -2.6q1.6 -1.2 3 .2t.2 3l-2.6 2.6z" fill="#1b1b1b" stroke="#1b1b1b" stroke-width="1.2" stroke-linejoin="round"/>
<path d="M308.2 293.6q4.6 -1 6 4.2" fill="none" stroke="#1a1a1a" stroke-width="1.7"/><path d="M306.2 294.6l4 -3.6l.6 4.6zM311.6 296.6l5.2 -.4l-2.2 4.6z" fill="#1a1a1a"/>
<svg x="304.7" y="337" width="12.7" height="13.2" viewBox="0 0 16 16" ><path d="M4.3 9.9h7.4L8 5.9z" fill="#f6f6f6"/></svg>
<svg x="304.7" y="410" width="12.7" height="13.2" viewBox="0 0 16 16" ><path d="M4.3 6.1h7.4L8 10.1z" fill="#f6f6f6"/></svg>
<g transform="translate(177.8 361.4) rotate(-42.4)"><path d="M0 0L3.6 -1.6L17.49 -1.6q1.2 0 1.2 1.6q0 1.6 -1.2 1.6L3.6 1.6Z" fill="#ececec" stroke="#2a2a2a" stroke-width="0.9" stroke-linejoin="round"/><path d="M0 0L2 -0.88L2 0.88Z" fill="#333"/><path d="M3.6 -1.6V1.6" stroke="#2a2a2a" stroke-width="0.7"/></g>
<g transform="translate(221.8 355) rotate(-38)"><rect x="-6.6" y="-3.6" width="13.2" height="7.2" rx="1.2" fill="#fafafa" stroke="#222" stroke-width="1"/><path d="M-2.4 -3.6h7.8q1.2 0 1.2 1.2v4.8q0 1.2 -1.2 1.2h-7.8z" fill="#8c8c8c" stroke="#222" stroke-width="1"/><path d="M-1.2 -2.4l5.6 0" stroke="#c4c4c4" stroke-width="1"/></g>
<circle cx="257.4" cy="355.6" r="5.9" fill="none" stroke="#222" stroke-width="1.1" stroke-dasharray="1.9 1.3"/>
<g transform="translate(252.2 361.4) rotate(-43.99)"><path d="M0 0L3.6 -1.4L14.92 -1.4q1.2 0 1.2 1.4q0 1.4 -1.2 1.4L3.6 1.4Z" fill="#d8d8d8" stroke="#2a2a2a" stroke-width="0.9" stroke-linejoin="round"/><path d="M0 0L2 -0.77L2 0.77Z" fill="#333"/><path d="M3.6 -1.4V1.4" stroke="#2a2a2a" stroke-width="0.7"/></g>
<ellipse cx="294.6" cy="356.0" rx="7.2" ry="6.2" fill="none" stroke="#222" stroke-width="1.1" stroke-dasharray="1.9 1.3"/>
<g transform="translate(295.4 356.0) rotate(-38) scale(0.82)"><rect x="-6.6" y="-3.6" width="13.2" height="7.2" rx="1.2" fill="#fafafa" stroke="#222" stroke-width="1"/><path d="M-2.4 -3.6h7.8q1.2 0 1.2 1.2v4.8q0 1.2 -1.2 1.2h-7.8z" fill="#8c8c8c" stroke="#222" stroke-width="1"/></g>
<g transform="translate(184.8 384.2)"><path d="M-7.6 7.2q-.6 -3.2 2 -5.4l1.6 1.8q-1.4 1.6 -1 3.6z" fill="#e8e8e8" stroke="#222" stroke-width="0.8"/><path d="M-4.6 0.4l5 -6.8l7.2 4.8l-3.4 7.8q-4.8 -.4 -8.8 -5.8z" fill="#8a8a8a" stroke="#1c1c1c" stroke-width="1.1" stroke-linejoin="round"/><path d="M.4 -6.4l7.2 4.8l-1 2.2q-4.6 -1 -7.4 -5.2z" fill="#2a2a2a"/><path d="M1.4 -7.6q3.4 -1.4 5.6 2" fill="none" stroke="#1c1c1c" stroke-width="1"/><path d="M-3 1.2l4.6 4.2" stroke="#e0e0e0" stroke-width="0.9"/></g>
<g transform="translate(215.3 390.4) rotate(-42.36)"><path d="M0 0L3.6 -1.5L15.72 -1.5q1.2 0 1.2 1.5q0 1.5 -1.2 1.5L3.6 1.5Z" fill="#f6f6f6" stroke="#2a2a2a" stroke-width="0.9" stroke-linejoin="round"/><path d="M0 0L2 -0.83L2 0.83Z" fill="#333"/><path d="M3.6 -1.5V1.5" stroke="#2a2a2a" stroke-width="0.7"/></g>
<g transform="translate(251.2 391) rotate(-43.69)"><path d="M0 0L3.6 -1.1L17.33 -1.1q1.2 0 1.2 1.1q0 1.1 -1.2 1.1L3.6 1.1Z" fill="#6e6e6e" stroke="#2a2a2a" stroke-width="0.9" stroke-linejoin="round"/><path d="M0 0L2 -0.61L2 0.61Z" fill="#222"/><path d="M3.6 -1.1V1.1" stroke="#2a2a2a" stroke-width="0.7"/></g>
<g transform="translate(177.6 420.9) rotate(-42.08)"><path d="M0 0q1.4 -1.6 3.2 -1.5l0 3q-1.8 .1 -3.2 -1.5z" fill="#222"/><rect x="3.4" y="-1.5" width="1.8" height="3" fill="#f4f4f4" stroke="#222" stroke-width="0.6"/><path d="M5.4 -1.4L17.8 -1.9q1.6 .2 1.6 1.9t-1.6 1.9L5.4 1.4z" fill="#121212"/></g>
<g transform="translate(214.2 420.9) rotate(-42.08)"><path d="M0 0q1.4 -1.6 3.2 -1.5l0 3q-1.8 .1 -3.2 -1.5z" fill="#222"/><rect x="3.4" y="-1.5" width="1.8" height="3" fill="#f4f4f4" stroke="#222" stroke-width="0.6"/><path d="M5.4 -1.4L17.8 -1.9q1.6 .2 1.6 1.9t-1.6 1.9L5.4 1.4z" fill="#121212"/></g>
<g transform="translate(250.8 420.9) rotate(-42.08)"><path d="M0 0q1.4 -1.6 3.2 -1.5l0 3q-1.8 .1 -3.2 -1.5z" fill="#222"/><rect x="3.4" y="-1.5" width="1.8" height="3" fill="#f4f4f4" stroke="#222" stroke-width="0.6"/><path d="M5.4 -1.4L17.8 -1.9q1.6 .2 1.6 1.9t-1.6 1.9L5.4 1.4z" fill="#121212"/></g>
<rect x="231.2" y="428" width="13.4" height="2.2" fill="#8a8a8a" rx="1.1" />
<svg x="231" y="435.6" width="13.4" height="12.6" viewBox="0 0 16 16" ><path d="M4.2 6.4h7.6L8 10.1z" fill="#f0f0f0"/></svg>
<path d="M253.6 447q3 -.6 4.2 -4q1.2 -4.4 2.6 -4.4t2.6 4.4q1.2 3.4 4.2 4z" fill="#111"/>
<path d="M270 447q1.4 -1 2 -4.2q1 -4.2 4.6 -4.2t4.6 4.2q.6 3.2 2 4.2z" fill="#111"/>
<path d="M286.6 447q1 -2 1.2 -5q.4 -3.4 5.2 -3.4t5.2 3.4q.2 3 1.2 5z" fill="#111"/>
<rect x="304" y="438.8" width="11" height="8" fill="#111" />
<svg x="210.5" y="457.2" width="11.2" height="11.3" viewBox="0 0 16 16" ><path d="M4.2 6.4h7.6L8 10.1z" fill="#f4f4f4"/></svg>
<svg x="250.7" y="515" width="13.5" height="13.2" viewBox="0 0 16 16" ><path d="M4.2 6.4h7.6L8 10.1z" fill="#f4f4f4"/></svg>
<svg x="250.7" y="535.1" width="13.5" height="13.2" viewBox="0 0 16 16" ><path d="M4.2 6.4h7.6L8 10.1z" fill="#f4f4f4"/></svg>
<rect x="156.4" y="556.7" width="11.3" height="11.4" fill="#868686" rx="2.2" />
<path d="M160.85 558.6h2.4v2.6h2.6v2.4h-2.6v2.6h-2.4v-2.6h-2.6v-2.4h2.6z" fill="#fafafa"/>
<rect x="186.4" y="573.6" width="0.8" height="66.7" fill="#dcdcdc" />
<rect x="215.7" y="573.6" width="0.8" height="66.7" fill="#dcdcdc" />
<rect x="245" y="573.6" width="0.8" height="66.7" fill="#dcdcdc" />
<rect x="274.3" y="573.6" width="0.8" height="66.7" fill="#dcdcdc" />
<rect x="303.6" y="573.6" width="0.8" height="66.7" fill="#dcdcdc" />
<rect x="157.4" y="602.3" width="146.6" height="0.8" fill="#dcdcdc" />
<rect x="157.4" y="631.3" width="146.6" height="0.8" fill="#dcdcdc" />
<svg x="304.7" y="574.8" width="12.7" height="13" viewBox="0 0 16 16" ><path d="M4.3 9.9h7.4L8 5.9z" fill="#f6f6f6"/></svg>
<svg x="304.7" y="626" width="12.7" height="13.2" viewBox="0 0 16 16" ><path d="M4.3 6.1h7.4L8 10.1z" fill="#f6f6f6"/></svg>
<circle cx="172.15" cy="583.6" r="0.45" fill="#222"/>
<circle cx="201.45" cy="583.6" r="0.5" fill="#222"/>
<circle cx="230.75" cy="583.6" r="0.55" fill="#222"/>
<circle cx="260.05" cy="583.6" r="0.65" fill="#222"/>
<circle cx="289.35" cy="583.6" r="0.75" fill="#222"/>
<circle cx="172.15" cy="612.6" r="0.8" fill="#222"/>
<circle cx="201.45" cy="612.6" r="0.85" fill="#222"/>
<circle cx="230.75" cy="612.6" r="0.95" fill="#222"/>
<circle cx="260.05" cy="612.6" r="1.15" fill="#222"/>
<circle cx="289.35" cy="612.6" r="1.3" fill="#222"/>
<circle cx="230.75" cy="641.6" r="1.6" fill="#222" clip-path="url(#gclip)"/>
<circle cx="260.05" cy="641.6" r="1.9" fill="#222" clip-path="url(#gclip)"/>
<circle cx="289.35" cy="641.6" r="2.2" fill="#222" clip-path="url(#gclip)"/>
<defs><clipPath id="gclip"><rect x="157" y="632" width="147" height="8.4"/></clipPath></defs>
<svg x="324.4" y="23.8" width="17.6" height="17" viewBox="0 0 16 16" ><path d="M4.6 7.2h4.6a3 3 0 0 1 0 6h-3.2" fill="none" stroke="#e8e8e8" stroke-width="2"/><path d="M6.4 3.6v7.2l-4 -3.6z" fill="#e8e8e8"/></svg>
<svg x="345.6" y="23.8" width="17.6" height="17" viewBox="0 0 16 16" ><g transform="translate(16 0) scale(-1 1)"><path d="M4.6 7.2h4.6a3 3 0 0 1 0 6h-3.2" fill="none" stroke="#ececec" stroke-width="2"/><path d="M6.4 3.6v7.2l-4 -3.6z" fill="#ececec"/></g></svg>
<svg x="371.9" y="23.8" width="17.6" height="17" viewBox="0 0 16 16" ><path d="M4 4l6 6M4 4v4M4 4h4" stroke="#e8e8e8" stroke-width="1.6" fill="none"/></svg>
<svg x="393.1" y="23.8" width="17.6" height="17" viewBox="0 0 16 16" ><path d="M3.6 8h8.8M3.6 5h8.8" stroke="#e6e6e6" stroke-width="1.4" fill="none"/></svg>
<path d="M418.2 33.2l2.8 3l4.8 -6.6" fill="none" stroke="#111" stroke-width="1.9"/>
<svg x="561.5" y="26" width="13" height="12.9" viewBox="0 0 16 16" ><path d="M4.2 6.4h7.6L8 10.1z" fill="#f4f4f4"/></svg>
<svg x="580" y="24.2" width="16.8" height="16.4" viewBox="0 0 16 16" ><rect x="3.3" y="6.7" width="9.4" height="2.6" fill="#f2f2f2"/></svg>
<svg x="599" y="24.2" width="16.8" height="16.4" viewBox="0 0 16 16" ><path d="M3.6 6.7h3.1v-3.1h2.6v3.1h3.1v2.6h-3.1v3.1h-2.6v-3.1h-3.1z" fill="#f2f2f2"/></svg>
<svg x="618.4" y="24.2" width="16.7" height="16.4" viewBox="0 0 16 16" ><rect x="4.9" y="4.9" width="6.2" height="6.2" fill="#f2f2f2"/></svg>
<circle cx="674.6" cy="34.6" r="1.6" fill="none" stroke="#222" stroke-width="0.9"/>
<svg x="685.9" y="26" width="12.9" height="12.9" viewBox="0 0 16 16" ><path d="M4.2 6.4h7.6L8 10.1z" fill="#f4f4f4"/></svg>
<svg x="704.2" y="24.2" width="16.5" height="16.4" viewBox="0 0 16 16" ><path d="M5.24 10.76A3.9 3.9 0 1 0 4.62 6.05" fill="none" stroke="#f2f2f2" stroke-width="1.6"/><path d="M2.7 9.4L6.7 7.3L2.5 4.7z" fill="#f2f2f2"/></svg>
<svg x="723.5" y="24.2" width="16.5" height="16.4" viewBox="0 0 16 16" ><g transform="translate(16 0) scale(-1 1)"><path d="M5.24 10.76A3.9 3.9 0 1 0 4.62 6.05" fill="none" stroke="#f2f2f2" stroke-width="1.6"/><path d="M2.7 9.4L6.7 7.3L2.5 4.7z" fill="#f2f2f2"/></g></svg>
<svg x="742.7" y="24.2" width="16.5" height="16.4" viewBox="0 0 16 16" ><rect x="4.9" y="4.9" width="6.2" height="6.2" fill="#f2f2f2"/></svg>
<svg x="806" y="23.8" width="17.6" height="17" viewBox="0 0 16 16" ><path d="M6 5.8h6.4" stroke="#eee" stroke-width="1.8"/><path d="M6.6 2.8v6l-3.6 -3z" fill="#eee"/><path d="M3.6 10.6h6.4" stroke="#eee" stroke-width="1.8"/><path d="M9.4 7.6v6l3.6 -3z" fill="#eee"/></svg>
<svg x="921.7" y="26" width="13.4" height="12.9" viewBox="0 0 16 16" ><path d="M4.2 6.4h7.6L8 10.1z" fill="#f4f4f4"/></svg>
<svg x="1158.4" y="45.6" width="13.6" height="13.2" viewBox="0 0 16 16" ><path d="M4.3 9.9h7.4L8 5.9z" fill="#f6f6f6"/></svg>
<svg x="1158.4" y="589.6" width="13.6" height="13" viewBox="0 0 16 16" ><path d="M4.3 6.1h7.4L8 10.1z" fill="#f6f6f6"/></svg>
<svg x="325.8" y="604.4" width="14.2" height="13.2" viewBox="0 0 16 16" ><path d="M10.1 4.3v7.4L6 8z" fill="#f6f6f6"/></svg>
<svg x="1142.6" y="604.4" width="14.2" height="13.2" viewBox="0 0 16 16" ><path d="M5.9 4.3v7.4L10 8z" fill="#f6f6f6"/></svg>
<path d="M329.6 625.2h5.6l3 3v10h-8.6z" fill="#f6f6f6" stroke="#c8c8d8" stroke-width="0.7"/><path d="M335.2 625.2v3h3z" fill="#d4d4e0"/>
<g transform="translate(1132.6 651.8)"><circle r="3.2" fill="#fafafa" stroke="#222" stroke-width="0.9"/><path d="M0 -5.6l2 2.4h-4zM0 5.6l2 -2.4h-4zM-5.6 0l2.4 -2v4zM5.6 0l-2.4 -2v4z" fill="#1a1a1a"/></g>
<path d="M1161 656.4l1 -3l6.6 -6.6l2 2l-6.6 6.6z" fill="#eee" stroke="#222" stroke-width="0.9"/>
<g><path d="M664.7 372.6C665.33 374.6 664.7 375.13 666.6 378.6C668.5 382.07 666.37 380.07 670.4 383C674.43 385.93 673.3 387.2 678.7 387.4C684.1 387.6 682.83 386.73 686.6 383.6C690.37 380.47 688.57 381.87 690 378C691.43 374.13 690.6 374 690.9 372L690.9 372L664.7 372.6Z" fill="#4d7fa9" stroke="#121212" stroke-width="2" stroke-linejoin="round" stroke-linecap="round"/><path d="M729.6 400.6C728.73 403.4 727.87 403.67 727 409C726.13 414.33 725.03 412.17 727 416.6C728.97 421.03 727.43 422.37 732.9 422.3C738.37 422.23 737.83 420.63 743.4 416.4C748.97 412.17 746.9 414.4 749.6 409.6C752.3 404.8 750.87 404.53 751.5 402L751.5 402L729.6 400.6Z" fill="#4d7fa9" stroke="#121212" stroke-width="2" stroke-linejoin="round" stroke-linecap="round"/><path d="M642.4 319.6C645.77 322.13 643.3 322.33 652.5 327.2C661.7 332.07 656.03 330.7 670 334.2C683.97 337.7 678.1 337.1 694.4 337.7C710.7 338.3 703.73 338.33 718.9 336C734.07 333.67 725.9 334.8 739.9 330.7C753.9 326.6 748.9 328.73 760.9 323.7C772.9 318.67 770.9 318.3 775.9 315.6L775.9 315.6C775.47 322.97 776.7 323.33 774.6 337.7C772.5 352.07 774.17 344.13 769.6 358.7C765.03 373.27 767 367.9 760.9 381.4C754.8 394.9 754.5 393.27 751.3 399.2L751.3 399.2C748.67 400.3 749.53 401.7 743.4 402.5C737.27 403.3 739.03 403.37 732.9 401.6C726.77 399.83 727.63 398.67 725 397.2L725 397.2C722.97 393.1 723.27 394.83 718.9 384.9C714.53 374.97 717.43 376.7 711.9 367.4C706.37 358.1 705.5 360.47 702.3 357L702.3 357C699.97 359.03 699.37 358.37 695.3 363.1C691.23 367.83 691.83 368.5 690.1 371.2L690.1 371.2C685.73 371.47 686.03 371.43 677 372C667.97 372.57 667.67 372.6 663 372.9L663 372.9C659.5 368.17 658.33 370.43 652.5 358.7C646.67 346.97 648.87 350.73 645.5 337.7C642.13 324.67 643.43 325.63 642.4 319.6Z" fill="#b4d1ea" stroke="#121212" stroke-width="2.3" stroke-linejoin="round" stroke-linecap="round"/><path d="M702 357q-5 -7 -7.6 -14" fill="none" stroke="#a3c6e4" stroke-width="2.4" opacity=".55" stroke-linecap="round"/><path d="M647.6 247.4C642.73 249.73 643.07 248.87 633 254.4C622.93 259.93 627.47 257.07 617.4 264C607.33 270.93 607.67 271.47 602.8 275.2L602.8 275.2L606.2 282.6L606.2 282.6C613.7 281.73 614.47 280.6 628.7 280C642.93 279.4 642.17 280.53 648.9 280.8L648.9 280.8L647.6 247.4Z" fill="#4490c9" stroke="#121212" stroke-width="2.3" stroke-linejoin="round" stroke-linecap="round"/><path d="M776.2 242.2C783.27 244.77 782.8 243.17 797.4 249.9C812 256.63 812.47 258.23 820 262.4L820 262.4L818 272.8L818 272.8C809.87 273.8 809.3 273.47 793.6 275.8C777.9 278.13 778.47 278.47 770.9 279.8L770.9 279.8C770.9 269.73 769.13 262.13 770.9 249.6C772.67 237.07 774.43 244.67 776.2 242.2Z" fill="#4490c9" stroke="#121212" stroke-width="2.3" stroke-linejoin="round" stroke-linecap="round"/><ellipse cx="599.8" cy="286.2" rx="4.3" ry="7.3" transform="rotate(14 599.8 286.2)" fill="#f0f0f0" stroke="#121212" stroke-width="3.1"/><ellipse cx="827.0" cy="271.2" rx="7.0" ry="5.8" transform="rotate(28 827 271.2)" fill="#f0f0f0" stroke="#121212" stroke-width="3.1"/><path d="M648.4 248.4L659.3 255.3L659.3 255.3L649.7 280.7L649.7 280.7L648.4 248.4Z" fill="#f2f2f2" stroke="#121212" stroke-width="2" stroke-linejoin="round" stroke-linecap="round"/><path d="M770.9 249.4L764.6 255.2L764.6 255.2L770.9 279L770.9 279L770.9 249.4Z" fill="#f2f2f2" stroke="#121212" stroke-width="2" stroke-linejoin="round" stroke-linecap="round"/><path d="M659.3 255.3C663.2 256.27 663.1 255.83 671 258.2C678.9 260.57 675 259.4 683 262.4C691 265.4 687.33 264.87 695 267.2C702.67 269.53 699 269.27 706 269.4C713 269.53 709.33 269.67 716 267.6C722.67 265.53 719.33 266.7 726 263.2C732.67 259.7 732.67 259.13 736 257.1L736 257.1C740.67 256.53 740.53 256.23 750 255.4C759.47 254.57 759.6 254.87 764.4 254.6L764.4 254.6C766.13 262.4 766.53 263.53 769.6 278C772.67 292.47 771.43 286 773.6 298C775.77 310 775.27 308.67 776.1 314L776.1 314C771.03 317.23 772.97 318.13 760.9 323.7C748.83 329.27 753.9 326.6 739.9 330.7C725.9 334.8 734.07 333.67 718.9 336C703.73 338.33 710.7 338.3 694.4 337.7C678.1 337.1 683.97 337.7 670 334.2C656.03 330.7 661.7 332.27 652.5 327.2C643.3 322.13 645.77 321.73 642.4 319L642.4 319C642.8 312.67 641.17 312.77 643.6 300C646.03 287.23 644.47 295.6 649.7 280.7C654.93 265.8 656.1 263.77 659.3 255.3Z" fill="#4490c9" stroke="#121212" stroke-width="2.3" stroke-linejoin="round" stroke-linecap="round"/><path d="M634.4 193.4C633.8 187.37 632.6 188.23 632.6 175.3C632.6 162.37 631.67 167.53 634.4 154.6C637.13 141.67 634.33 147.7 640.8 136.5C647.27 125.3 643.47 130.47 653.8 121C664.13 111.53 658.9 115 671.8 108.1C684.7 101.2 678.1 103.73 692.5 100.3C706.9 96.87 702.27 98.3 715 97.8C727.73 97.3 718.6 97.27 730.7 98.8C742.8 100.33 738.4 98 751.3 102.4C764.2 106.8 759.03 104.07 769.4 112C779.77 119.93 775.5 115.43 782.4 126.2C789.3 136.97 786.6 132.23 790.1 144.3C793.6 156.37 792.2 151.2 792.9 162.4C793.6 173.6 793.57 168.43 792.2 177.9C790.83 187.37 789.93 186.5 788.8 190.8" fill="none" stroke="#121212" stroke-width="2.3" stroke-linecap="round" stroke-linejoin="round"/><path d="M634.4 193.4C635.27 198.57 635.3 198.57 637 208.9C638.7 219.23 637.37 214.93 639.5 224.4C641.63 233.87 640.37 229.83 643.4 237.3C646.43 244.77 643.6 241.07 648.6 246.8C653.6 252.53 655.13 251.93 658.4 254.5" fill="none" stroke="#121212" stroke-width="2.3" stroke-linecap="round" stroke-linejoin="round"/><path d="M788.8 190.8C788.37 195.1 788.37 195.97 787.5 203.7C786.63 211.43 787.9 206.23 786.2 214C784.5 221.77 785.4 219.23 782.4 227C779.4 234.77 781.67 230.23 777.2 237.3C772.73 244.37 776.33 242.43 769 248.2C761.67 253.97 766.2 251.63 755.2 254.6C744.2 257.57 742.4 256.27 736 257.1" fill="none" stroke="#121212" stroke-width="2.3" stroke-linecap="round" stroke-linejoin="round"/><path d="M640 184.6L651.2 166.7L669.8 189.5L689.9 166.7L713.6 192.9L734.2 166.2L749.3 189.5L769.6 166.4L787.9 187.2" fill="none" stroke="#121212" stroke-width="2.3" stroke-linejoin="miter" stroke-linecap="round"/><path d="M634.4 192C632.13 195.67 629.47 194 627.6 203C625.73 212 625.33 210.53 628.8 219C632.27 227.47 634.93 225.27 638 228.4" fill="none" stroke="#121212" stroke-width="2.1" stroke-linecap="round" stroke-linejoin="round"/><path d="M635.4 198.6C634.73 202.87 632.67 203.07 633.4 211.4C634.13 219.73 636.2 219.53 637.6 223.6" fill="none" stroke="#121212" stroke-width="1.7" stroke-linecap="round" stroke-linejoin="round"/><path d="M788.8 192C791.33 194.17 794.23 192.03 796.4 198.5C798.57 204.97 799.03 204.03 795.3 211.4C791.57 218.77 788.57 217.53 785.2 220.6" fill="none" stroke="#121212" stroke-width="2.1" stroke-linecap="round" stroke-linejoin="round"/><path d="M788 198.6C788.8 201.17 790.87 200.83 790.4 206.3C789.93 211.77 787.87 212.1 786.6 215" fill="none" stroke="#121212" stroke-width="1.7" stroke-linecap="round" stroke-linejoin="round"/><path d="M680.9 197.2C682.6 197.6 683 197.1 686 198.4C689 199.7 687.73 199.37 689.9 201.1C692.07 202.83 691.63 202.77 692.5 203.6" fill="none" stroke="#121212" stroke-width="2.6" stroke-linecap="round" stroke-linejoin="round"/><path d="M728.6 198.6C730.53 197.93 730.7 197.67 734.4 196.6C738.1 195.53 737.93 195.8 739.7 195.4" fill="none" stroke="#121212" stroke-width="2.6" stroke-linecap="round" stroke-linejoin="round"/><path d="M653.8 219.4C658.1 218.3 657.23 217.03 666.7 216.1C676.17 215.17 672.73 215.7 682.2 216.6C691.67 217.5 690.8 218.07 695.1 218.8" fill="none" stroke="#121212" stroke-width="2.1" stroke-linecap="round" stroke-linejoin="round"/><path d="M730.2 214.6C736.4 213.17 735.3 211.13 748.8 210.3C762.3 209.47 763.4 211.5 770.7 212.1" fill="none" stroke="#121212" stroke-width="2.1" stroke-linecap="round" stroke-linejoin="round"/><path d="M696.4 244.2C698.6 245.07 698.27 245.73 703 246.8C707.73 247.87 705.6 247.8 710.6 247.4C715.6 247 713.47 247.27 718 245.6C722.53 243.93 722.13 243.47 724.2 242.4" fill="none" stroke="#121212" stroke-width="2.5" stroke-linecap="round" stroke-linejoin="round"/><circle cx="689.8" cy="259.8" r="2.3" fill="none" stroke="#f6f6f6" stroke-width="1.1"/><path d="M691.4 261.8l0 9l2.2 -2.2l1.8 3.6l1.8 -.9l-1.8 -3.4l3 -.2z" fill="#f8f8f8" stroke="#4a607a" stroke-width="0.8"/><circle cx="698.2" cy="272.8" r="1.5" fill="#f4f4f4" stroke="#8aa0b8" stroke-width="0.6"/></g>
</svg>
</div></body></html>
